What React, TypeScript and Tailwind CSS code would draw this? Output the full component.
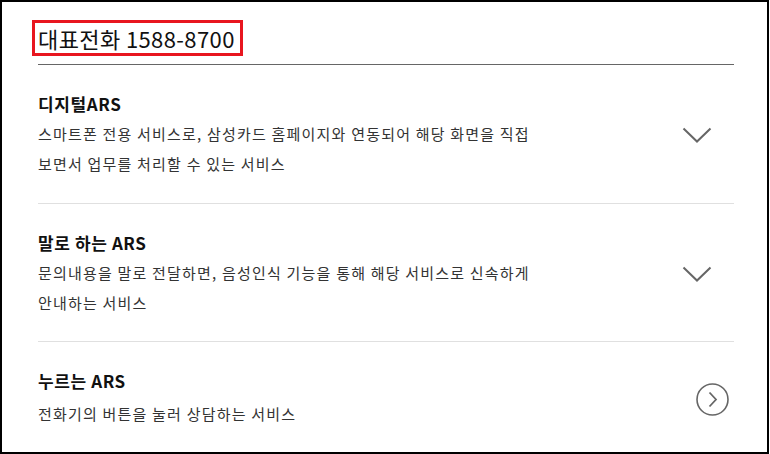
const FONT = 'font-["Noto_Sans_CJK_KR","Noto_Sans",sans-serif]'

type ArsItem = {
  title: string
  lines: string[]
  kind: 'toggle' | 'link'
}

const ITEMS: ArsItem[] = [
  {
    title: '디지털ARS',
    lines: ['스마트폰 전용 서비스로, 삼성카드 홈페이지와 연동되어 해당 화면을 직접', '보면서 업무를 처리할 수 있는 서비스'],
    kind: 'toggle',
  },
  {
    title: '말로 하는 ARS',
    lines: ['문의내용을 말로 전달하면, 음성인식 기능을 통해 해당 서비스로 신속하게', '안내하는 서비스'],
    kind: 'toggle',
  },
  {
    title: '누르는 ARS',
    lines: ['전화기의 버튼을 눌러 상담하는 서비스'],
    kind: 'link',
  },
]

function ChevronDown() {
  return (
    <svg width="30" height="17" viewBox="0 0 30 17" fill="none" className="mr-[22px]">
      <path d="M1.5 1.5 L15 14.5 L28.5 1.5" stroke="#666" strokeWidth="2" />
    </svg>
  )
}

function CircleArrow() {
  return (
    <svg width="33" height="33" viewBox="0 0 33 33" fill="none" className="mr-[5px]">
      <circle cx="16.5" cy="16.5" r="15.5" stroke="#666" strokeWidth="1.6" />
      <path d="M13.5 9.5 L20 16.5 L13.5 23.5" stroke="#666" strokeWidth="1.8" />
    </svg>
  )
}

export default function App() {
  return (
    <div className={`w-[769px] h-[454px] border-2 border-black bg-white ${FONT}`}>
      <div className="pl-[36px] pr-[33px] pt-[18px]">
        {/* heading with focus ring */}
        <h2 className="ml-[-6px] inline-block border-[3px] border-[#e8161f] pl-[3px] pr-[5px] text-[22px] leading-[30px] font-normal text-[#111] tracking-[0.4px]">
          대표전화 1588-8700
        </h2>
        <div className="mt-[8px] h-px bg-[#666]" />

        {ITEMS.map((item, i) => (
          <div
            key={item.title}
            className={[
              'flex items-center justify-between',
              i > 0 ? 'border-t border-[#e0e0e0]' : '',
              i === 0 ? 'pt-[27px] pb-[24px]' : i === 1 ? 'pt-[27px] pb-[23px]' : 'pt-[27px]',
            ].join(' ')}
          >
            <div>
              <p className="text-[17px] leading-[24px] font-bold text-[#111] tracking-[0.6px]">{item.title}</p>
              <div className={item.kind === 'link' ? 'mt-[6px]' : 'mt-[3px]'}>
                {item.lines.map(line => (
                  <p key={line} className="text-[15px] leading-[30px] text-[#333] tracking-[1.2px]">
                    {line}
                  </p>
                ))}
              </div>
            </div>
            {item.kind === 'toggle' ? <ChevronDown /> : <CircleArrow />}
          </div>
        ))}
      </div>
    </div>
  )
}
